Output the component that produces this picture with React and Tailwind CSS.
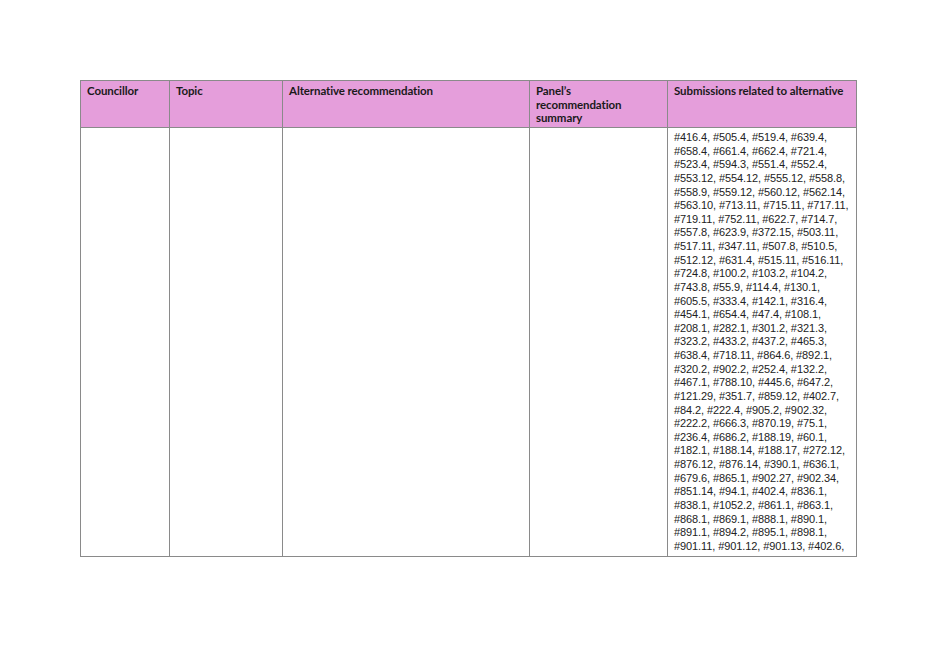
import React from "react";

const lines = [
  "#416.4, #505.4, #519.4, #639.4,",
  "#658.4, #661.4, #662.4, #721.4,",
  "#523.4, #594.3, #551.4, #552.4,",
  "#553.12, #554.12, #555.12, #558.8,",
  "#558.9, #559.12, #560.12, #562.14,",
  "#563.10, #713.11, #715.11, #717.11,",
  "#719.11, #752.11, #622.7, #714.7,",
  "#557.8, #623.9, #372.15, #503.11,",
  "#517.11, #347.11, #507.8, #510.5,",
  "#512.12, #631.4, #515.11, #516.11,",
  "#724.8, #100.2, #103.2, #104.2,",
  "#743.8, #55.9, #114.4, #130.1,",
  "#605.5, #333.4, #142.1, #316.4,",
  "#454.1, #654.4, #47.4, #108.1,",
  "#208.1, #282.1, #301.2, #321.3,",
  "#323.2, #433.2, #437.2, #465.3,",
  "#638.4, #718.11, #864.6, #892.1,",
  "#320.2, #902.2, #252.4, #132.2,",
  "#467.1, #788.10, #445.6, #647.2,",
  "#121.29, #351.7, #859.12, #402.7,",
  "#84.2, #222.4, #905.2, #902.32,",
  "#222.2, #666.3, #870.19, #75.1,",
  "#236.4, #686.2, #188.19, #60.1,",
  "#182.1, #188.14, #188.17, #272.12,",
  "#876.12, #876.14, #390.1, #636.1,",
  "#679.6, #865.1, #902.27, #902.34,",
  "#851.14, #94.1, #402.4, #836.1,",
  "#838.1, #1052.2, #861.1, #863.1,",
  "#868.1, #869.1, #888.1, #890.1,",
  "#891.1, #894.2, #895.1, #898.1,",
  "#901.11, #901.12, #901.13, #402.6,",
];

export default function App() {
  const th =
    "border border-[#8a8a8a] bg-[#e59edb] align-top text-left font-bold px-[6px] pt-[3px] pb-0 font-['Lato',_'Liberation_Sans',_sans-serif] text-[11.5px] leading-[13.63px] text-[#1a1a1a]";
  const td = "border border-[#8a8a8a] align-top px-[6px] pt-[3px] pb-[3px]";
  return (
    <div className="w-[934px] h-[661px] bg-white pl-[80px] pt-[80px] text-[#222] text-[11px] leading-[13.63px] tracking-[-0.1px] font-['Liberation_Sans',_Arial,_sans-serif]">
      <table className="table-fixed border-collapse w-[776px]">
        <colgroup>
          <col className="w-[89px]" />
          <col className="w-[113px]" />
          <col className="w-[247px]" />
          <col className="w-[138px]" />
          <col className="w-[189px]" />
        </colgroup>
        <thead>
          <tr className="h-[47px]">
            <th className={th}>Councillor</th>
            <th className={th}>Topic</th>
            <th className={th}>Alternative recommendation</th>
            <th className={th}>
              Panel’s
              <br />
              recommendation
              <br />
              summary
            </th>
            <th className={th + " whitespace-nowrap"}>
              Submissions related to alternative
            </th>
          </tr>
        </thead>
        <tbody>
          <tr>
            <td className={td}></td>
            <td className={td}></td>
            <td className={td}></td>
            <td className={td}></td>
            <td className={td}>
              {lines.map((l, i) => (
                <div key={i} className="whitespace-nowrap">
                  {l}
                </div>
              ))}
            </td>
          </tr>
        </tbody>
      </table>
    </div>
  );
}
